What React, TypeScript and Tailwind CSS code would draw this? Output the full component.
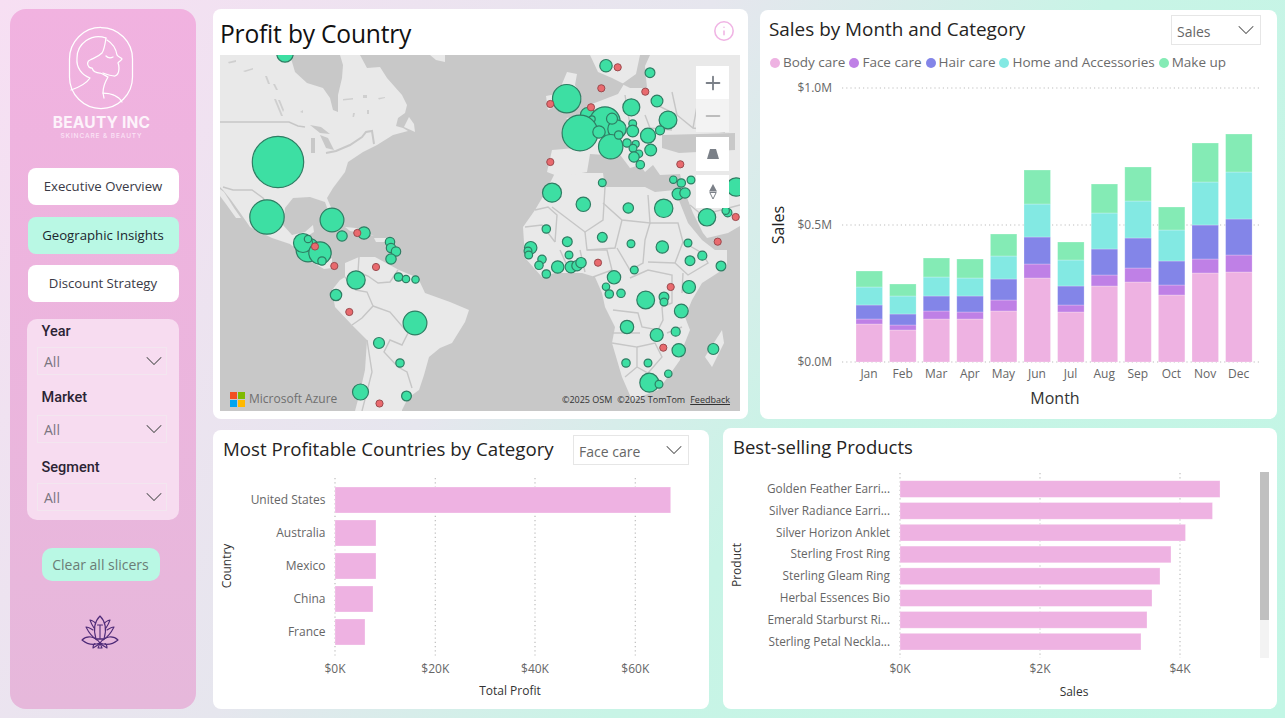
import { ChevronDown, Info, Minus, Plus } from "lucide-react";

const months = ["Jan", "Feb", "Mar", "Apr", "May", "Jun", "Jul", "Aug", "Sep", "Oct", "Nov", "Dec"];
const stackColors = ["#eeb2e2", "#bf80e6", "#8385e8", "#83e9e3", "#84ebb5"];
// top edge of each segment per month, page px
const stacks = [
  [324, 319, 305, 287, 271],
  [330, 325, 314, 296, 284],
  [319, 311, 296, 277, 258],
  [319, 312, 296, 278, 259],
  [311, 300, 279, 256, 234],
  [278, 264, 237, 204, 170],
  [312, 305, 286, 260, 242],
  [286, 275, 249, 213, 184],
  [282, 268, 238, 201, 167],
  [295, 285, 261, 230, 207],
  [273, 259, 225, 182, 143],
  [272, 255, 219, 172, 134],
];

const legend = [
  ["Body care", "#eeb2e2"],
  ["Face care", "#bf80e6"],
  ["Hair care", "#8385e8"],
  ["Home and Accessories", "#83e9e3"],
  ["Make up", "#84ebb5"],
];

const countries = [
  ["United States", 487, 670.7],
  ["Australia", 520, 376],
  ["Mexico", 553, 376],
  ["China", 586, 373],
  ["France", 619, 365],
] as const;

const products = [
  ["Golden Feather Earri...", 1220],
  ["Silver Radiance Earri...", 1212.5],
  ["Silver Horizon Anklet", 1185.5],
  ["Sterling Frost Ring", 1171],
  ["Sterling Gleam Ring", 1160],
  ["Herbal Essences Bio", 1152],
  ["Emerald Starburst Ri...", 1147],
  ["Sterling Petal Neckla...", 1141],
] as const;

const greenDots = [
  [285, 54, 8], [278, 162, 25.5], [267, 217, 17], [332, 220, 11.7], [342, 236, 5], [364, 233, 6],
  [308, 250, 11.7], [303, 243, 9.3], [320, 253, 11], [322, 261, 4], [308, 239, 3.5],
  [390, 242, 4.5], [391, 248, 4.5], [396, 251.5, 4.5], [391, 259, 5], [398.5, 277, 4], [406, 279, 3.5], [415.5, 279.5, 3.5],
  [356, 280, 9], [336, 295, 5.5], [415, 323, 11.7], [379, 343, 5.3], [400, 363, 4], [360.5, 392, 7.8], [406.5, 396, 4.7],
  [606, 65.7, 6], [650, 72.7, 4.7], [566.7, 98.7, 14], [657, 101, 5.7], [631.3, 107.3, 8.3], [587.7, 114.7, 7],
  [605, 122, 15], [592, 119, 3], [580, 133, 17.7], [617, 129, 9], [612, 118.7, 5.3], [599, 132, 6], [610.7, 146.7, 12],
  [618.7, 135, 4], [632.7, 123.7, 3.7], [632.7, 131, 5.7], [668, 120, 8.7], [660, 130.3, 4.3], [648, 135.7, 7.3],
  [627, 143, 4], [635.7, 144, 3.3], [633, 148.3, 3.7], [639, 153.7, 3.5], [634, 157, 5], [650.7, 150, 5.7], [640.3, 164.7, 4],
  [673.3, 179.7, 3.5], [691, 180, 3.7], [681.3, 183, 4], [678, 194, 5.7], [685, 193, 5], [736, 187, 9],
  [552, 192.7, 9.3], [583.3, 204.3, 7], [602.3, 182.7, 3.7], [628.3, 208, 5], [663.7, 208.3, 9], [707, 217.3, 8.5], [727.7, 212.7, 4], [725.7, 210.7, 3.5],
  [546.3, 229, 4], [567.3, 241.7, 4.7], [602.3, 237.3, 4.7], [631, 243.7, 3.7], [662.3, 247, 6], [688, 243, 3.7],
  [702.3, 255.7, 4.3], [690, 260.7, 4.7], [721, 266, 4.7], [530.7, 247.7, 6], [528, 251, 3.7], [528.7, 255, 3.7],
  [542, 259.3, 4], [539, 265.3, 4], [546.3, 274, 4], [557.7, 267, 6], [571, 267, 5.7], [577, 265.7, 5], [581, 262.7, 5], [569, 255, 3.7],
  [614, 277.3, 6.5], [634.3, 270, 3.7], [606, 286.7, 3.5], [609.3, 294, 4], [621, 293.3, 4], [645.7, 300, 8.7],
  [689, 287, 6.3], [664, 297, 4.7], [664, 302, 3.7], [681.3, 311, 6.7], [627, 327, 6.5], [656.7, 335, 6.3], [675.7, 331.7, 4.3],
  [678.7, 350.3, 6.5], [713.3, 349, 5.3], [626, 363, 4], [648, 363, 3.7], [668.3, 373.7, 3.5], [649.3, 382.7, 9.3], [659, 384.3, 3.7],
];

const redDots = [
  [357.3, 233], [315, 246.5], [334.3, 266], [376, 267], [349.3, 312], [379.5, 403.5],
  [617.7, 67.3], [601.3, 88.3], [645.3, 91.7], [550.3, 104], [591, 107.3], [680.3, 164.3], [550.3, 162],
  [735.7, 217], [717.7, 241.7], [598, 262.7], [670.7, 287], [663.3, 347.7],
];

const land = [
  // north america
  "M220 55 L290 55 L295 72 L307 83 L323 88 L330 98 L333 110 L338 112 L338 95 L342 78 L343 65 L340 55 L360 55 L367 68 L380 67 L387 78 L402 95 L407 105 L405 113 L398 118 L396 126 L403 128 L408 131 L393 135 L377 145 L363 152 L348 162 L345 172 L333 188 L327 198 L333 212 L329 213 L325 202 L310 197 L293 198 L285 208 L283 225 L292 235 L305 232 L313 225 L314 232 L304 238 L300 246 L312 252 L325 263 L332 258 L332 268 L324 269 L312 262 L290 244 L272 238 L250 227 L241 214 L231 200 L223 190 L220 187 Z",
  "M409 117 L414 124 L415 132 L404 127 Z",
  "M430 55 L445 55 L445 62 L436 60 Z",
  // baja
  "M220 189 L224 192 L234 208 L241 218 L236 218 L226 204 L220 196 Z",
  // cuba, hispaniola
  "M345 227 L356 228 L374 236 L362 233 L350 231 Z",
  "M374 238 L386 238 L386 242 L376 242 Z",
  // south america
  "M345 263 L359 257 L375 257 L399 270 L418 278 L425 293 L450 302 L469 310 L465 322 L452 343 L440 348 L429 357 L424 375 L419 390 L408 398 L402 410 L402 411 L355 411 L360 392 L365 370 L367 340 L352 325 L335 307 L332 290 L340 280 L345 277 Z",
  // africa
  "M555 173 L570 173 L603 173 L605 187 L622 187 L645 187 L655 192 L675 190 L680 203 L688 223 L702 240 L715 250 L727 250 L727 267 L702 283 L692 300 L685 317 L690 330 L682 350 L680 360 L668 377 L658 390 L632 400 L622 377 L612 343 L615 327 L605 307 L602 293 L595 277 L582 273 L555 273 L542 277 L525 258 L523 227 L535 210 L545 193 Z",
  // madagascar
  "M705 357 L722 330 L724 343 L712 367 Z",
  // eurasia
  "M590 55 L740 55 L740 226 L728 233 L707 238 L703 233 L693 213 L684 190 L681 178 L680 174 L660 175 L653 165 L645 172 L640 165 L630 168 L618 152 L606 155 L590 154 L587 172 L560 177 L547 172 L552 150 L575 148 L578 128 L566 118 L586 116 L592 104 L618 94 L624 84 L612 78 L598 72 Z",
  // uk, ireland
  "M567 72 L577 74 L575 85 L582 98 L580 106 L562 110 L558 104 L566 96 L562 84 Z",
  "M546 96 L556 94 L556 106 L548 110 Z",
];

const borders = [
  "M220 122 L289 122 L298 126 L305 127",
  "M223 187 L233 190 L252 190 L263 198 L268 205 L278 212",
  "M359 257 L358 272 L368 276 L378 283 L390 282 L398 270",
  "M345 277 L356 290 L367 292 L373 306 L362 318 L352 325",
  "M373 306 L390 312 L408 333 L402 345 L390 340 L384 352 L398 367 L407 372 L412 388",
  "M367 340 L372 372 L362 411",
  // africa
  "M535 210 L548 207 L557 215 L555 242",
  "M525 227 L542 225 L555 242",
  "M552 207 L585 232 L603 220 L605 187",
  "M603 203 L622 220 L650 223 L648 195",
  "M585 232 L587 250 L615 248 L622 220",
  "M617 248 L630 270 L643 263 L645 240 L650 223",
  "M650 223 L678 223 L683 242 L675 263 L648 262",
  "M675 263 L688 275 L708 263 L702 253 L683 242",
  "M683 273 L682 293",
  "M630 278 L648 270 L672 275 L672 303 L662 307 L663 320 L658 330 L642 327 L638 313 L613 310",
  "M640 333 L612 333",
  "M612 343 L637 347 L637 367 L625 377",
  "M637 347 L655 343 L662 357 L648 373 L637 367",
  "M587 250 L607 250 L612 270 L593 277",
  "M667 333 L682 327",
  "M560 250 L570 272",
  "M580 250 L585 272",
  // europe, asia
  "M657 105 L677 115 L693 128 L725 132",
  "M645 115 L650 128 L672 130",
  "M625 95 L630 125",
  "M672 92 L677 115",
  "M700 90 L693 128",
  "M690 205 L702 215 L740 205",
  "M697 176 L716 190 L740 185",
];

const water = [
  "M640 55 L650 55 L645 66 L647 88 L630 88 L622 84 L636 74 Z",
  "M662 135 L735 133 L735 150 L679 153 L662 148 Z",
  "M310 125 L321 127 L330 134 L320 133 Z",
  "M311 138 L315 138 L315 153 L311 153 Z",
  "M320 135 L328 138 L334 150 L326 148 Z",
];

// small inland lakes, drawn paler than the sea
const lakes = [
  "M274 99 L276 99 L283 116 L281 116 Z",
  "M278 100 L280 100 L284 110 L283 112 Z",
  "M243 71 L253 68 L253 69.5 L245 72 Z",
  "M265 76 L267 76 L270 84 L268 84 Z",
  "M273 84 L275 84 L278 90 L276 90 Z",
  "M343 99 L353 98 L353 99.5 L343 100.5 Z",
  "M363 95 L367 95 L367 98 L363 98 Z",
  "M378 98 L385 97 L385 98 L379 99.5 Z",
  "M367 110 L369 110 L369 114 L367 114 Z",
  "M353 113 L355 113 L354 117 L352.5 117 Z",
  "M228 62 L236 60 L236 62 L229 63.5 Z",
  "M300 112 L303 110 L303 113 Z",
];

function Dropdown({ label, width }: { label: string; width: string }) {
  return (
    <div className={`flex h-[30px] ${width} items-center justify-between border border-[#e6e6e6] bg-white pl-[5px] text-[14px] text-[#666]`}>
      <span className="pt-[2px]">{label}</span>
      <ChevronDown size={28} strokeWidth={0.9} className="text-[#555]" />
    </div>
  );
}

function Slicer({ label, top, gap }: { label: string; top: string; gap: string }) {
  return (
    <div className={top}>
      <div className="pl-[14.5px] text-[14.5px] font-medium leading-[20px] text-[#2b2434] [font-family:Roboto,sans-serif]">{label}</div>
      <div className={`ml-[10px] ${gap} flex h-[28px] w-[130px] items-center justify-between border border-[#f3e6ef] pl-[6px] text-[14px] text-[#7a7580]`}>
        <span className="pt-px">All</span>
        <ChevronDown size={28} strokeWidth={0.9} className="-mr-[2px] text-[#555]" />
      </div>
    </div>
  );
}

function Sidebar() {
  return (
    <aside className="flex h-[700px] w-[186px] shrink-0 flex-col items-center rounded-[16px] bg-linear-to-b from-[#f1b2e0] to-[#e6b8db]">
      <svg width="84" height="96" viewBox="60 20 84 96" className="mt-[11px] mr-[3px] block" fill="none" stroke="#fff" strokeWidth="1.25" strokeLinecap="round" strokeLinejoin="round">
        <rect x="69.5" y="27.5" width="63" height="81" rx="31.5" />
        <path d="M106 38 C92 33 77 43 77 58 C76 68 82 75 90 78 C86 84 80 87 71 90" />
        <path d="M106 38 C105 45 104 50 102 53 C98 57 94 58 90 60 C87 61 87 65 89 67 C90 68 91 68 92 68 C93 71 96 73 100 73 C103 74 106 76 108 77 C105 82 103 88 103 93 L104 98" />
        <path d="M107 40 C112 43 116 49 117 55 C118 57 122 58 122 59 C121 61 118 62 118 63 C119 65 119 67 119 68 C119 72 118 75 115 76 C112 76 108 75 103 73" />
        <path d="M103 93 C109 93 118 95 122 102" />
        <path d="M106 56 C108 58 111 58 113 57" />
      </svg>
      <div className="mr-[3px] text-[15.5px] font-bold leading-[14px] tracking-[0.2px] text-[#fdf3fb] [font-family:Inter,sans-serif]">BEAUTY INC</div>
      <div className="mt-[1px] mr-[3px] text-[6.5px] font-medium leading-[10px] tracking-[0.9px] text-[#fbe3f6] [font-family:Inter,sans-serif]">SKINCARE &amp; BEAUTY</div>
      <div className="mt-[27px] flex h-[37px] w-[151px] items-center justify-center rounded-[8px] bg-white text-[13.2px] text-[#3a3a46]">Executive Overview</div>
      <div className="mt-[12px] flex h-[37px] w-[151px] items-center justify-center rounded-[8px] bg-[#b9f8e4] text-[13.2px] text-[#20262e]">Geographic Insights</div>
      <div className="mt-[11px] flex h-[37px] w-[151px] items-center justify-center rounded-[8px] bg-white text-[13.2px] text-[#3a3a46]">Discount Strategy</div>
      <div className="mt-[17px] h-[201px] w-[152px] rounded-[10px] bg-[#f7dcf0] pt-[3px]">
        <Slicer label="Year" top="" gap="mt-[5px]" />
        <Slicer label="Market" top="mt-[13px]" gap="mt-[7px]" />
        <Slicer label="Segment" top="mt-[15px]" gap="mt-[5px]" />
      </div>
      <div className="mt-[28px] mr-[5px] flex h-[33px] w-[118px] items-center justify-center rounded-[10px] bg-[#b9f8e4] text-[14px] text-[#6b7d76]">Clear all slicers</div>
      <svg width="38" height="34" viewBox="0 0 38 34" className="mt-[34px] mr-[6px] block" fill="none" stroke="#4f2b78" strokeWidth="1.1" strokeLinejoin="round" strokeLinecap="round">
        <path d="M19 1 C14 6 12 14 15 24 L23 24 C26 14 24 6 19 1 Z" />
        <path d="M13 13 C11 10 10 8 9 5 C10 5 12 6 14.5 8" />
        <path d="M25 13 C27 10 28 8 29 5 C28 5 26 6 23.5 8" />
        <path d="M16 25 C11 22 7 16 5 12 C6 12 9 13 12 15" />
        <path d="M22 25 C27 22 31 16 33 12 C32 12 29 13 26 15" />
        <path d="M1 25 C6 20 14 21 19 28 C24 21 32 20 37 25 C31 30 24 30 19 28 C14 30 7 30 1 25 Z" />
        <path d="M19 28 C17 30 14 32 12 33 C12 31 13 29 14 28.5" />
        <path d="M19 28 C21 30 24 32 26 33 C26 31 25 29 24 28.5" />
        <path d="M19 28 L17 33 H21 Z" />
        <path d="M19 10 V23 M16.5 10 H21.5 M16 24 H22" />
      </svg>
    </aside>
  );
}

function MapCard() {
  return (
    <section className="h-[410px] w-[535px] rounded-[8px] bg-white px-[7px]">
      <div className="flex h-[46px] items-start justify-between pr-[6px] pt-[10px]">
        <h2 className="text-[24.6px] leading-[30px] tracking-[-0.2px] text-[#111]">Profit by Country</h2>
        <Info size={22} strokeWidth={1.7} className="mt-px text-[#f0b4e4]" />
      </div>
      <div className="relative h-[356px] w-[520px] overflow-hidden">
        <svg width="520" height="356" viewBox="220 55 520 356" className="block bg-[#c8c8c8]">
          {land.map((d) => <path key={d} d={d} fill="#e9e9e9" />)}
          {water.map((d) => <path key={d} d={d} fill="#c8c8c8" />)}
          {lakes.map((d) => <path key={d} d={d} fill="#cfcfcf" />)}
          <path d="M326 153 L336 151 L350 145 L362 137 L366 132 L372 131 L374 144" fill="none" stroke="#c8c8c8" strokeWidth="2" />
          {borders.map((d) => <path key={d} d={d} fill="none" stroke="#c6c6c6" strokeWidth="1.4" />)}
          {greenDots.map(([cx, cy, r], i) => <circle key={i} cx={cx} cy={cy} r={r + 0.2} fill="#3ddfa3" stroke="#2f7d63" strokeWidth="1.2" />)}
          {redDots.map(([cx, cy], i) => <circle key={i} cx={cx} cy={cy} r="3.6" fill="#e96a6e" stroke="#9b4a4e" strokeWidth="1" />)}
        </svg>
        <div className="absolute left-[476px] top-[11px] flex w-[33px] flex-col text-[#7b8088]">
          <div className="flex h-[33px] items-center justify-center bg-white"><Plus size={22} strokeWidth={2} /></div>
          <div className="flex h-[33px] items-center justify-center bg-[#f3f3f3] text-[#bcbcbc]"><Minus size={22} strokeWidth={2} /></div>
          <div className="mt-[5px] flex h-[34px] items-center justify-center bg-white">
            <svg width="12" height="10" viewBox="0 0 12 10"><path d="M3 0 H9 L12 10 H0 Z" fill="#7b8088" /></svg>
          </div>
          <div className="mt-[4px] flex h-[33px] items-center justify-center bg-white">
            <svg width="8" height="15" viewBox="0 0 8 15"><path d="M4 0 L8 7.5 H0 Z" fill="#7b8088" /><path d="M4 15 L0.8 8.5 H7.2 Z" fill="none" stroke="#7b8088" /></svg>
          </div>
        </div>
        <div className="absolute bottom-[4px] left-[10px] flex items-center gap-[4px]">
          <div className="grid h-[15px] w-[15px] grid-cols-2 gap-px">
            <span className="bg-[#f25022]" />
            <span className="bg-[#7fba00]" />
            <span className="bg-[#00a4ef]" />
            <span className="bg-[#ffb900]" />
          </div>
          <span className="text-[12px] leading-[16px] text-[#6f6f6f]">Microsoft Azure</span>
        </div>
        <div className="absolute bottom-[5px] right-[10px] flex gap-[5px] text-[9px] leading-[12px] text-[#333]">
          <span>©2025 OSM</span>
          <span>©2025 TomTom</span>
          <span className="underline">Feedback</span>
        </div>
      </div>
    </section>
  );
}

function SalesCard() {
  return (
    <section className="mt-px h-[409px] w-[517px] rounded-[8px] bg-white">
      <div className="flex h-[35px] items-start justify-between pl-[9px] pr-[16px] pt-[5px]">
        <h2 className="text-[18.9px] leading-[28px] text-[#252423]">Sales by Month and Category</h2>
        <Dropdown label="Sales" width="w-[90px]" />
      </div>
      <div className="flex h-[27px] items-center gap-[4px] pl-[10px] pt-[8px] text-[13.5px] text-[#6b6b6b]">
        {legend.map(([name, color]) => (
          <div key={name} className="flex items-center gap-[3px]">
            <span className="h-[10px] w-[10px] rounded-full" style={{ backgroundColor: color }} />
            <span>{name}</span>
          </div>
        ))}
      </div>
      <svg width="517" height="347" viewBox="760 72 517 347" className="block">
        {[88, 225, 362].map((y, i) => (
          <g key={y}>
            <line x1="842" x2="1262" y1={y} y2={y} stroke="#bdbdbd" strokeWidth="1.2" strokeDasharray="1.2 3" />
            <text x="832" y={y + 4} textAnchor="end" fontSize="12" fill="#666">{["$1.0M", "$0.5M", "$0.0M"][i]}</text>
          </g>
        ))}
        {stacks.map((tops, m) => (
          <g key={m}>
            {tops.map((top, s) => (
              <rect
                key={s}
                x={856 + m * 33.6}
                y={top}
                width="26.5"
                height={(s === 0 ? 362 : tops[s - 1]) - top}
                fill={stackColors[s]}
                stroke="#ffffff"
                strokeOpacity="0.35"
                strokeWidth="0.7"
              />
            ))}
            <text x={869 + m * 33.6} y="378" textAnchor="middle" fontSize="12" fill="#666">{months[m]}</text>
          </g>
        ))}
        <text x="1055" y="404" textAnchor="middle" fontSize="16" fill="#333">Month</text>
        <text transform="translate(784 225) rotate(-90)" textAnchor="middle" fontSize="16" fill="#222">Sales</text>
      </svg>
    </section>
  );
}

function CountryCard() {
  return (
    <section className="h-[279px] w-[496px] rounded-[8px] bg-white">
      <div className="flex h-[40px] items-start justify-between pl-[10px] pr-[20px] pt-[5px]">
        <h2 className="text-[18.7px] leading-[28px] text-[#252423]">Most Profitable Countries by Category</h2>
        <Dropdown label="Face care" width="w-[116px]" />
      </div>
      <svg width="496" height="239" viewBox="213 470 496 239" className="block">
        {[335, 435.3, 535, 635.3].map((x, i) => (
          <g key={x}>
            <line x1={x} x2={x} y1="478" y2="658" stroke="#bdbdbd" strokeWidth="1.2" strokeDasharray="1.2 3" />
            <text x={x} y="673" textAnchor="middle" fontSize="12" fill="#666">{["$0K", "$20K", "$40K", "$60K"][i]}</text>
          </g>
        ))}
        {countries.map(([name, y, end]) => (
          <g key={name}>
            <rect x="335" y={y} width={end - 335} height="26" fill="#eeb2e2" stroke="#ffffff" strokeOpacity="0.4" strokeWidth="0.7" />
            <text x="325.5" y={y + 17} textAnchor="end" fontSize="12" fill="#666">{name}</text>
          </g>
        ))}
        <text x="510" y="695" textAnchor="middle" fontSize="12" fill="#333">Total Profit</text>
        <text transform="translate(231 566) rotate(-90)" textAnchor="middle" fontSize="12" fill="#333">Country</text>
      </svg>
    </section>
  );
}

function ProductCard() {
  return (
    <section className="h-[281px] w-[554px] rounded-[8px] bg-white">
      <div className="flex h-[42px] items-start pl-[10px] pt-[5px]">
        <h2 className="text-[18.5px] leading-[28px] text-[#252423]">Best-selling Products</h2>
      </div>
      <svg width="554" height="239" viewBox="723 470 554 239" className="block">
        {[900, 1040, 1180].map((x, i) => (
          <g key={x}>
            <line x1={x} x2={x} y1="473" y2="658" stroke="#bdbdbd" strokeWidth="1.2" strokeDasharray="1.2 3" />
            <text x={x} y="673" textAnchor="middle" fontSize="12" fill="#666">{["$0K", "$2K", "$4K"][i]}</text>
          </g>
        ))}
        {products.map(([name, end], i) => (
          <g key={name}>
            <rect x="900" y={480.7 + i * 21.8} width={end - 900} height="16.7" fill="#eeb2e2" stroke="#ffffff" strokeOpacity="0.4" strokeWidth="0.7" />
            <text x="890" y={493 + i * 21.8} textAnchor="end" fontSize="11.8" fill="#666">{name}</text>
          </g>
        ))}
        <rect x="1260" y="472" width="9" height="186" fill="#f3f3f3" />
        <rect x="1260" y="472" width="9" height="148" fill="#c0c0c0" />
        <text x="1074" y="696" textAnchor="middle" fontSize="12" fill="#333">Sales</text>
        <text transform="translate(741 565) rotate(-90)" textAnchor="middle" fontSize="12" fill="#333">Product</text>
      </svg>
    </section>
  );
}

export default function App() {
  return (
    <div className="flex h-[718px] w-[1285px] overflow-hidden bg-[linear-gradient(125deg,#f7dff3_0%,#e6e6ee_40%,#c8f4e6_62%,#c2f6e5_100%)] pl-[10px] pt-[9px] [font-family:'Open_Sans',sans-serif]">
      <Sidebar />
      <main className="ml-[17px] flex flex-col">
        <div className="flex items-start gap-[12px]">
          <MapCard />
          <SalesCard />
        </div>
        <div className="mt-[9px] flex h-[281px] items-end gap-[14px]">
          <CountryCard />
          <ProductCard />
        </div>
      </main>
    </div>
  );
}
